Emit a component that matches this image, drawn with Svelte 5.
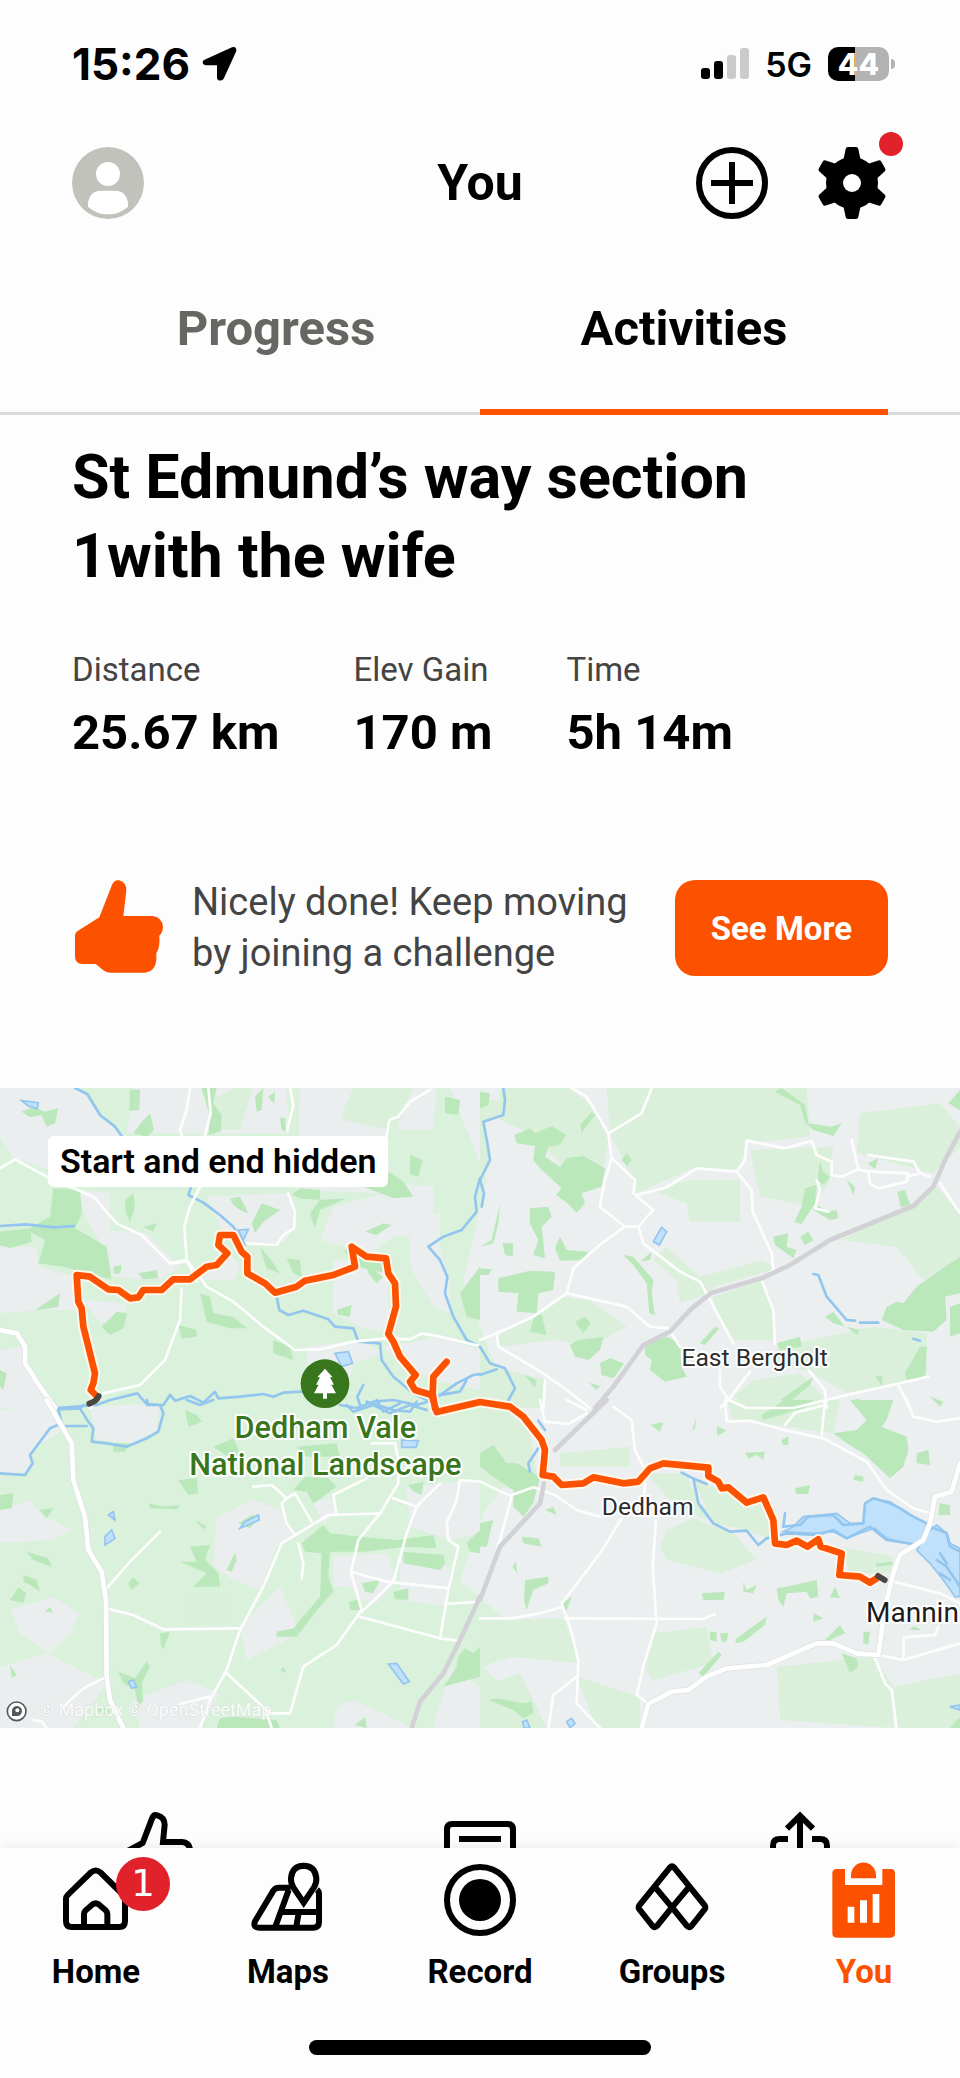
<script>
  let tab = $state('Activities');

  const stats = [
    { label: 'Distance', value: '25.67 km' },
    { label: 'Elev Gain', value: '170 m' },
    { label: 'Time', value: '5h 14m' }
  ];

  const teeth = [0, 60, 120, 180, 240, 300];

  const route =
    'M290,948 L272,930 280,910 285,880 265,800 250,740 245,685 235,665 230,585 270,590 325,628 355,630 390,655 415,652 430,630 485,630 520,598 570,598 620,560 650,555 682,520 655,495 660,465 700,465 725,515 742,530 742,580 795,610 825,638 890,620 915,602 1000,585 1065,560 1055,500 1100,530 1158,535 1165,580 1185,610 1188,680 1165,762 1180,785 1200,830 1247,885 1230,905 1245,930 1295,945 1310,996 1440,966 1530,980 1570,1010 1625,1080 1635,1110 1628,1185 1660,1190 1685,1215 1750,1210 1780,1192 1870,1210 1915,1205 1950,1165 1990,1150 2125,1163 2125,1188 2155,1205 2165,1225 2185,1222 2240,1268 2290,1252 2320,1320 2325,1390 2360,1395 2390,1382 2422,1400 2455,1378 2462,1400 2525,1420 2518,1485 2580,1490 2610,1508 2630,1495 M1305,985 L1298,940 1300,890 1340,845';

  // Each tile is drawn in its own 1440-unit wide coordinate space.
  const tiles = [
    {
      x: 0,
      y: 0,
      plain: [
        '0,24 240,24 300,110 380,170 200,180 145,270 40,235 0,170',
        '400,24 860,24 865,160 380,160 390,100',
        '900,24 1060,24 1020,110 1160,150 1170,310 1300,320 1300,470 1180,470 1110,520 960,480 1000,380 1150,340 890,330',
        '620,350 870,340 885,440 850,490 740,490 660,440',
        '560,24 620,24 630,140 560,150',
        '240,330 330,340 330,450 440,460 540,560 480,600 330,590 320,520 250,400',
        '0,500 110,500 115,560 220,590 230,690 120,690 0,700',
        '0,810 60,800 150,984 0,984',
        '300,730 250,660 380,670 370,720',
        '1000,540 1160,550 1170,760 1080,740 1000,700',
        '1230,420 1320,400 1320,500 1350,620 1350,700 1300,680 1230,560',
        '1240,24 1310,24 1300,150 1190,150',
        '1150,800 1320,770 1440,810 1440,930 1300,900 1200,850',
        '660,500 690,520 720,560 700,600 600,600 640,570',
        '920,800 1080,780 1150,820 1060,850 1050,900 920,860'
      ],
      field: ['1060,24 1230,24 1190,120 1160,150 1030,120', '640,60 700,24 760,24 720,150 650,150'],
      wood: [
        '65,95 100,80 135,95 175,85 165,130 140,140 125,105 90,112',
        '390,30 420,28 418,90 388,92',
        '400,160 430,120 450,100 462,150 440,170',
        '605,24 650,24 640,70 665,105 662,155 625,165 630,110',
        '765,50 790,24 785,90 770,95',
        '805,50 825,35 822,72',
        '840,112 855,115 858,155 845,150',
        '1335,50 1380,60 1375,105 1335,100',
        '1230,225 1268,240 1255,290 1230,282',
        '1090,320 1165,275 1210,305 1240,350 1180,355 1130,335',
        '160,325 240,330 245,400 225,445 320,500 335,598 240,575 190,560 115,550 135,480 80,450 150,410',
        '0,455 90,445 95,485 30,505 0,495',
        '375,360 400,340 405,380 390,425 378,400',
        '430,440 470,430 460,455',
        '340,560 365,555 362,580 342,582',
        '415,580 470,570 475,595 430,598',
        '105,690 180,640 175,680 135,688',
        '305,740 350,695 382,700 370,745 330,765',
        '535,735 590,750 590,770 545,775',
        '600,640 630,650 640,700 700,710 740,745 690,745 620,725',
        '755,430 785,370 840,390 790,425 765,460',
        '690,355 720,350 745,400 720,390 700,375',
        '875,345 900,325 960,330 960,360 900,355',
        '930,400 960,360 1040,355 960,390 945,445',
        '1095,455 1150,430 1175,435 1130,465',
        '860,535 900,540 905,590 880,580',
        '1030,510 1100,525 1180,550 1160,580 1070,560',
        '1100,555 1150,590 1130,610 1105,580',
        '1380,640 1440,560 1440,720 1400,710',
        '1010,690 1055,675 1050,710 1015,705',
        '820,780 870,800 880,840 820,820',
        '780,500 820,550 840,580 800,565',
        '0,870 20,880 10,930 0,920'
      ],
      water: ['1005,820 1045,815 1058,850 1025,860', '65,62 115,68 112,86 85,78', '715,450 745,448 730,480'],
      rivers: [
        'M225,24 L262,42 300,105 345,140 365,168',
        'M572,325 L565,345 610,368 660,405 700,440 735,495',
        'M0,438 L80,433 160,442 222,438',
        'M830,650 L838,690 865,705 910,692 985,718 1005,740 1060,745 1075,785 1140,790 1145,840 1180,890 1240,940 1290,965',
        'M1440,295 L1425,350 1430,395 1385,450 1330,470 1285,500 1320,540 1342,590 1335,640 1360,710 1400,780 1440,800',
        'M170,984 L290,975 330,960 412,940 442,975 490,975 510,945 525,962 570,948 610,968 645,935 655,955 720,950 790,942 820,950 850,938 905,935',
        'M1020,975 L1070,984 1120,965 1180,960 1250,975 1300,960 1370,910 1420,885 1440,882',
        'M1290,950 L1380,935 1400,900',
        'M1090,915 L1072,950 1080,975'
      ],
      roads: [
        'M570,24 L560,90 540,150 600,320 570,380 553,440 560,540 620,620 700,665 790,740 885,810 960,808 1060,785 1160,775 1230,778 1265,760 1320,770 1440,798',
        'M0,265 L45,238 140,290 280,350 350,430 425,465 510,550 560,545',
        'M545,625 L540,720 495,840 420,915 310,940 270,984',
        'M870,24 L880,75 862,150',
        'M865,340 L885,395 882,445 850,465 830,495 740,490',
        'M1290,30 L1230,65 1195,110 1168,120 1155,200',
        'M510,550 L560,540 590,605',
        'M625,24 L632,100 615,165'
      ],
      major: ['M0,750 L50,760 75,800 75,850 120,920 165,984'],
      trunk: []
    },
    {
      x: 1440,
      y: 0,
      plain: [],
      field: [
        '60,24 270,24 350,90 385,180 365,300 240,250 150,160 60,120',
        '380,24 980,24 990,170 800,190 775,275 640,265 470,340 440,260 390,160',
        '630,300 780,300 780,425 630,425 620,370 510,330',
        '1140,100 1380,70 1440,140 1440,200 1360,280 1130,220',
        '810,210 1060,200 1050,300 1000,380 840,350',
        '0,60 70,60 60,110 10,130 30,260 0,300',
        '520,540 560,500 660,590 850,540 880,560 880,570 700,620 690,640 600,670 590,600',
        '700,650 850,600 885,690 880,780 760,780 705,690',
        '50,770 250,650 330,660 440,740 330,800 220,780 60,800',
        '890,800 1180,740 1340,760 1340,890 1100,940 1000,880 890,850',
        '820,900 960,880 1040,960 820,984 760,950',
        '1280,380 1370,320 1440,400 1440,530 1330,600 1250,500 1080,480',
        '0,840 80,870 200,900 190,984 0,984'
      ],
      wood: [
        '0,35 30,40 25,75 0,85',
        '103,165 150,145 165,160 215,138 258,165 240,195 205,200 195,230 240,260 260,235 310,228 375,265 365,320 305,340 315,370 290,398 262,370 228,345 245,325 180,265 160,240 165,198 110,190',
        '300,135 335,95 345,105 305,158',
        '425,240 440,218 455,240 440,258',
        '150,385 205,380 215,410 185,440 195,535 160,525 175,480 150,430',
        '225,505 240,470 260,510 325,515 310,540 240,542',
        '68,490 100,490 98,530 75,525',
        '0,500 35,480 60,370 55,430 40,490',
        '55,595 150,572 225,575 220,630 175,640 170,700 110,695 115,640 55,635',
        '0,565 35,568 25,585 0,585',
        '165,700 185,705 200,765 150,755',
        '285,725 315,710 332,730 310,760',
        '270,795 295,780 370,770 360,810 325,840 285,830',
        '360,850 390,835 432,850 400,895 365,885',
        '328,908 360,918 348,930',
        '135,885 170,900 165,925',
        '495,795 560,770 600,790 605,860 620,890 555,905 510,870 515,840 495,825',
        '430,525 460,530 520,600 515,640 525,705 508,700 500,610 460,555',
        '480,545 515,515 510,540',
        '660,790 705,740 718,745 675,795',
        '885,35 905,24 975,75 985,130 1055,140 1085,130 1060,168 1000,150 975,125 960,75',
        '1020,245 1030,275 1050,290 1030,315 1012,300',
        '975,325 1010,315 1005,370 965,432 943,425 965,380',
        '1003,370 1045,395 1070,390 1075,415 1050,420 1000,390',
        '1100,300 1125,320 1120,345',
        '1252,335 1275,330 1290,375 1262,382',
        '1163,250 1195,235 1185,268',
        '880,470 925,460 920,500 950,510 940,535 885,495',
        '960,470 985,455 1000,480 975,495',
        '1405,70 1440,30 1440,90',
        '1220,680 1250,665 1270,670 1310,620 1380,570 1440,530 1440,640 1395,650 1400,720 1360,755 1270,750 1205,720',
        '1035,710 1060,695 1095,740 1060,730',
        '1100,740 1140,750 1130,765',
        '1320,800 1340,800 1335,895 1280,900 1275,880',
        '1410,680 1440,670 1440,760 1410,770',
        '1185,890 1205,885 1208,920',
        '890,790 960,770 965,800 900,810',
        '900,960 1000,890 990,915 930,965',
        '1125,955 1200,975 1210,984 1140,984',
        '1350,950 1390,965 1380,980'
      ],
      water: ['545,442 560,455 538,495 520,485'],
      rivers: [
        'M70,24 L75,60 70,105 10,125 22,190 30,240 0,300 12,340 5,380',
        'M0,800 L30,850 75,865 105,925 85,960',
        'M0,885 L50,868',
        'M1000,582 L1015,585 1040,650 1100,720 1125,722 M1140,728 L1195,728',
        'M1300,776 L1320,782'
      ],
      roads: [
        'M275,24 L320,50 385,160 395,235 465,300 460,340 520,390 475,440 490,490 600,575 660,605 690,660 760,790',
        'M515,24 L485,100 385,160',
        'M395,235 L372,310 360,380 435,440 475,440',
        'M435,440 L365,490 280,565 260,640 160,710 50,760 0,780',
        'M50,760 L55,800 190,880 260,930 330,984',
        'M260,640 L350,660 440,680 510,740 565,745 600,800',
        'M470,345 L560,322 650,265 770,275 815,330 818,395 875,520 880,570 845,600 880,690 885,790',
        'M770,275 L795,240 800,182 915,205 995,183 1010,225 1055,245 1055,285 1085,290 1135,268 1165,275 1170,310 1195,325 1280,305 1285,280 1170,275',
        'M1135,268 L1115,180 M1165,225 L1300,245 1320,280 1280,290',
        'M1320,280 L1350,290',
        'M1380,310 L1440,400',
        'M1010,300 L1020,330 1005,385 1045,395',
        'M985,870 L1035,930 1040,984',
        'M720,870 L720,920 745,960 810,875',
        'M720,984 L745,960 800,984 940,984 1100,945 1250,912 1345,890',
        'M1255,915 L1290,984',
        'M195,900 L190,984'
      ],
      major: [],
      trunk: ['M1440,155 L1400,230 1360,320 1300,378 1050,480 930,555 845,595 695,638 635,685 570,755 490,795 400,920 345,984']
    },
    {
      x: 0,
      y: 960,
      plain: [
        '0,30 150,10 200,80 100,150 80,215 0,225',
        '270,20 480,10 470,90 400,130 290,120',
        '0,330 90,300 130,350 220,390 150,420 0,430',
        '30,630 160,590 240,640 210,700 150,760 60,700',
        '650,350 760,300 840,330 880,400 830,440 780,570 700,540 640,500',
        '0,800 140,760 320,850 220,984 0,984',
        '400,900 560,840 660,880 600,984 420,984',
        '940,310 990,290 1010,340 970,370',
        '1220,260 1440,240 1440,400 1350,420 1230,380',
        '1000,470 1160,460 1190,540 1130,610 1080,600 1050,560 1000,560',
        '1010,920 1060,900 1240,984 1000,984',
        '1200,480 1350,500 1340,620 1200,600',
        '720,680 840,560 900,700 740,780',
        '1350,800 1440,860 1440,984 1300,984'
      ],
      field: ['560,590 690,580 690,670 560,665'],
      wood: [
        '555,30 590,45 605,65 565,80',
        '340,130 390,130 375,155 340,155',
        '640,140 700,115 720,160 690,175',
        '890,140 1010,130 1020,170 920,170',
        '535,240 590,235 595,280 565,285',
        '0,285 40,280 35,325 0,330',
        '120,330 160,325 140,355',
        '445,310 490,320 540,315 530,328 450,325',
        '880,270 915,230 985,235 1010,260 940,310 920,275',
        '1225,255 1270,245 1265,285 1240,275',
        '715,370 755,345 780,350 750,385',
        '585,360 620,380 610,388',
        '905,430 940,400 970,375 990,400 1080,410 1190,420 1300,405 1310,445 1220,440 1090,455 990,455 985,530 1000,575 960,620 935,650 890,710 830,710 830,695 880,685 960,590 965,460 915,455',
        '1210,455 1330,465 1335,490 1320,510 1210,490',
        '1400,430 1440,390 1440,460 1410,455',
        '570,440 630,435 615,480 655,520 660,560 580,560 620,520 540,485 590,485',
        '680,510 705,458 710,480 695,515',
        '80,455 145,475 155,500 100,480',
        '70,525 110,540 120,575 100,560 70,545',
        '30,600 55,562 78,580 70,608',
        '385,550 400,532 418,550 395,570',
        '135,635 150,620 160,638',
        '480,700 510,695 490,748 482,735',
        '355,815 405,835 440,785 450,800 425,850 430,900 415,925 405,870 370,850',
        '1085,550 1140,540 1120,580 1095,575',
        '1180,575 1225,565 1225,600 1185,598',
        '1048,605 1075,598 1080,630 1050,630',
        '840,812 850,800 860,818',
        '30,795 50,825 35,835',
        '1375,770 1395,745 1420,760 1440,740 1440,830 1330,860 1370,800',
        '660,955 700,950 830,960 840,984 650,984',
        '1065,975 1095,950 1100,984',
        '290,915 330,930 325,945 295,935'
      ],
      water: ['1165,792 1190,790 1228,845 1210,852', '325,345 340,335 345,360', '315,410 335,390 345,415 315,435', '385,845 400,840 410,860 395,865', '720,385 735,365 775,345 778,360', '1205,120 1255,122 1248,142 1205,142'],
      rivers: [
        'M250,15 L240,25 175,28 185,70 150,85 90,165 98,190 75,225 0,220',
        'M240,25 L265,65 280,85 275,125 320,130 380,140 440,115 475,95 490,40 480,15 445,12 440,0',
        'M185,78 L260,78',
        'M560,0 L600,15 640,0',
        'M1040,15 L1060,35 1120,15 1170,40 1230,15 1280,30 M1100,5 L1180,30 1230,35 1250,5 M1130,0 L1150,35 1200,10'
      ],
      roads: [
        'M320,565 L390,485 480,395',
        'M320,625 L400,645 490,688 720,685',
        'M320,830 L250,865 190,920',
        'M1145,340 L985,345 845,430 790,560 720,690 680,810 630,900 600,984',
        'M630,890 L540,912',
        'M760,260 L815,255 860,295 845,310 860,370 885,405',
        'M860,295 L885,280 935,365 M1100,235 L1000,285 1010,345',
        'M895,430 L910,490 905,535',
        'M1115,130 L1185,130 1195,180 1195,250 1140,340 1075,420 1053,515 1085,630 1010,735 910,800 870,940 810,940 680,820',
        'M1053,515 L1160,545 1345,565',
        'M1320,250 L1250,320 1220,400 1180,545 1085,635',
        'M1180,295 L1250,320',
        'M1080,650 L1320,715 1370,722',
        'M1380,240 L1370,300 1340,370 1345,420 1375,440 1345,570 1320,715',
        'M1440,245 L1380,240 M1335,612 L1440,605',
        'M100,960 L125,965 140,984',
        'M800,940 L815,984'
      ],
      major: ['M140,0 L215,130 220,240 255,350 265,450 305,515 318,600 320,830 330,900 370,984'],
      trunk: ['M1440,590 L1380,720 1330,820 1260,905 1235,984']
    },
    {
      x: 1440,
      y: 960,
      plain: [],
      field: [
        '0,25 80,25 150,100 170,220 100,270 0,240',
        '560,390 640,355 760,400 830,480 720,520 560,480 540,440',
        '500,220 620,220 650,300 740,380 660,350 560,290',
        '640,240 780,290 860,310 870,420 800,390 700,370',
        '0,660 250,655 285,740 290,790 100,770 0,800',
        '520,700 680,680 700,790 520,840 490,800',
        '290,830 480,890 480,984 350,984',
        '740,0 1080,0 1060,100 920,80 760,60',
        '1080,440 1240,470 1230,520 1110,520',
        '890,800 1180,770 1240,860 1240,984 900,960',
        '1240,860 1440,820 1440,984 1250,984',
        '240,160 450,140 450,200 240,200',
        '0,860 120,820 200,984 0,984'
      ],
      wood: [
        '0,160 40,135 80,190 110,190 180,230 160,310 130,350 100,320 100,270 40,230 0,200',
        '0,370 40,360 20,440 0,440',
        '125,410 175,415 185,440 130,430',
        '195,330 220,320 230,345',
        '135,540 205,530 205,550 160,570 140,630 132,600',
        '97,500 108,485 112,520',
        '245,610 275,590 255,645',
        '512,75 550,65 540,95',
        '710,78 740,92 712,108',
        '635,95 650,50 645,85',
        '905,120 925,108 925,135 908,135',
        '795,158 855,155 850,180 830,165 805,175',
        '845,45 900,10 910,0 1000,0 970,25 850,60',
        '1060,100 1130,90 1160,60 1110,0 1240,0 1220,60 1205,80 1280,110 1285,150 1270,200 1230,235 1150,160 1100,130',
        '1310,160 1345,150 1350,195 1310,190',
        '1125,225 1150,230 1150,245 1120,240',
        '945,265 990,255 985,282 950,282',
        '1378,310 1410,315 1410,345 1375,345',
        '890,565 920,560 1010,540 1015,590 990,595 980,575 920,580 910,620 895,600',
        '1065,560 1080,595 1050,590',
        '1190,490 1240,485 1235,495 1185,500',
        '790,545 800,570 830,555 820,580 790,575',
        '665,580 735,575 730,600 670,600',
        '770,715 860,650 855,675 790,725 765,730',
        '690,695 710,695 710,725 690,720',
        '720,700 745,700 740,725 725,725',
        '1000,640 1030,655 1000,665',
        '1035,720 1080,675 1095,700 1050,720',
        '1150,695 1170,695 1165,735 1150,730',
        '1085,760 1130,775 1135,800 1110,820',
        '655,820 715,755 725,765 670,830',
        '25,900 50,895 130,910 155,905 160,940 130,955 100,930',
        '1300,678 1325,690 1290,690',
        '1430,960 1440,955 1440,984 1410,984'
      ],
      water: [
        '1155,310 1180,295 1230,305 1290,345 1340,370 1330,420 1300,435 1220,415 1185,385 1140,400 1100,415 1060,395 1000,400 910,395 940,380 970,350 1020,345 1070,340 1110,370 1150,370',
        '1340,400 1370,375 1400,400 1410,430 1440,445 1440,590 1425,590 1390,540 1350,490 1310,450',
        '260,965 275,955 285,970 270,984',
        '128,965 140,960 150,984 132,984',
        '1410,920 1440,915 1440,930'
      ],
      rivers: [
        'M605,218 L645,238 680,252',
        'M640,235 L655,310 700,370 750,395 800,392 835,435 860,415 920,400 1010,405',
        'M915,340 L910,380 960,375 985,350 1060,345 1090,375 1150,370 1155,310 1180,295 1230,310 1260,325 1300,350 1340,370',
        'M1010,405 L1060,390 1100,415 1170,380 1220,420 1300,432',
        'M1350,380 L1400,400 1410,440 1440,455 M1370,480 L1400,500 1440,560 M1380,520 L1410,540 M1380,460 L1400,490',
        'M150,215 L145,190 175,145',
        'M175,62 L195,90'
      ],
      roads: [
        'M180,0 L195,65 265,72 320,40 M260,0 L320,30',
        'M400,20 L455,60 465,150 490,200',
        'M495,250 L490,310',
        'M0,245 L95,290 60,420 50,450',
        'M95,285 L160,262 225,285 290,330 360,350',
        'M425,355 L360,460 245,610 270,680 295,780 290,910 360,984',
        'M0,655 L95,655 180,640 245,622',
        'M255,655 L670,657 705,642',
        'M528,360 L518,500 530,670 490,800 470,885 505,910',
        'M290,830 L220,885 205,984',
        'M735,0 L740,65 810,62 920,92 1030,115 1160,185 1220,270 1300,325 1350,340',
        'M915,75 L945,38 1035,15 M1035,0 L1025,105',
        'M1280,0 L1300,50 1370,65 1440,55',
        'M1240,545 L1380,580 1440,610',
        'M1195,765 L1270,780 1440,730 M1270,780 L1272,712 1365,705 1375,680',
        'M1185,775 L1215,850 1235,870 1250,984'
      ],
      major: [
        'M1440,190 L1415,275 1365,290 1350,370 1330,420 1260,465 1240,520 1215,620 1195,765 1130,760 1060,730 1010,730 860,795 740,805 680,830 625,870 575,875 505,912 485,984'
      ],
      trunk: ['M380,0 L225,150 M192,250 L180,310 60,440 0,600']
    }
  ];
</script>

<div class="app">
  <div class="status">
    <div class="clock">
      <span>15:26</span>
      <svg class="arrow" viewBox="456 50 108 108" aria-hidden="true">
        <path d="M462,92 L546,54 Q560,50 559,65 L521,148 Q514,157 504,152 Q501,150 501,144 V108 H467 Q458,106 458,99 Q458,94 462,92Z" />
      </svg>
    </div>
    <div class="signals">
      <svg class="bars" viewBox="0 0 48 32" aria-hidden="true">
        <rect x="0" y="20" width="9" height="11" rx="3" />
        <rect x="13" y="13" width="9" height="18" rx="3" />
        <rect class="off" x="26" y="7" width="9" height="24" rx="3" />
        <rect class="off" x="39" y="0" width="9" height="31" rx="3" />
      </svg>
      <span class="network">5G</span>
      <div class="battery"><span>44</span></div>
    </div>
  </div>

  <header>
    <button class="icon" aria-label="Profile">
      <svg viewBox="66 351 216 216">
        <circle cx="174" cy="459" r="108" fill="#c2c2bd" />
        <circle cx="174" cy="432" r="36" fill="#fff" />
        <path d="M114,530 V520 Q118,484 152,482 H196 Q230,484 234,520 V530 Q208,553 174,553 Q140,553 114,530Z" fill="#fff" />
      </svg>
    </button>
    <h1>You</h1>
    <div class="tools">
      <button class="icon" aria-label="Add">
        <svg viewBox="0 0 72 72" fill="none" stroke="#000" stroke-width="6">
          <circle cx="36" cy="36" r="33" />
          <path d="M36,15 V57 M15,36 H57" />
        </svg>
      </button>
      <button class="icon" aria-label="Settings">
        <svg viewBox="468 381 216 216">
          <circle cx="576" cy="489" r="78" />
          {#each teeth as angle}
            <path transform="rotate({angle} 576 489)" d="M549,425 L557,387 Q558,381 564,381 H588 Q594,381 595,387 L603,425Z" />
          {/each}
          <circle cx="576" cy="489" r="27" fill="#fff" />
        </svg>
        <i class="dot"></i>
      </button>
    </div>
  </header>

  <div class="tabs" role="tablist">
    {#each ['Progress', 'Activities'] as name}
      <button role="tab" aria-selected={tab === name} onclick={() => (tab = name)}>{name}</button>
    {/each}
  </div>

  <main>
    <h2>St Edmund’s way section 1with the wife</h2>

    <dl>
      {#each stats as s}
        <div>
          <dt>{s.label}</dt>
          <dd>{s.value}</dd>
        </div>
      {/each}
    </dl>

    <section class="challenge">
      <svg class="thumb" viewBox="36 30 288 288" aria-hidden="true">
        <path d="M118,142 L157,42 Q164,28 178,31 Q200,38 199,62 L190,138 H278 Q308,142 309,172 Q308,188 298,197 Q301,230 289,250 V270 Q286,304 256,308 H150 Q138,308 130,301 L107,282 H66 Q46,280 45,260 V195 Q46,188 53,183Z" />
      </svg>
      <p>Nicely done! Keep moving by joining a challenge</p>
      <button class="cta">See More</button>
    </section>

    <div class="map">
      <svg viewBox="0 24 2880 1920" preserveAspectRatio="xMidYMid slice" role="img" aria-label="Route map">
        <rect x="0" y="0" width="2880" height="1960" fill="#ebeff0" />
        <polygon
          fill="#daf1dc"
          points="0,0 1340,0 1460,300 1390,600 1500,900 1600,1100 1450,1300 1380,1500 1540,1640 1450,1760 1640,1960 0,1960"
        />
        {#each tiles as t}
          <g transform="translate({t.x} {t.y})">
            {#each t.plain as p}<polygon class="plain" points={p} />{/each}
            {#each t.field as p}<polygon class="field" points={p} />{/each}
            {#each t.wood as p}<polygon class="wood" points={p} />{/each}
          </g>
        {/each}
        {#each tiles as t}
          <g transform="translate({t.x} {t.y})">
            {#each t.water as p}<polygon class="water" points={p} />{/each}
            {#each t.rivers as d}<path class="river" {d} />{/each}
            {#each t.roads as d}<path class="road" {d} />{/each}
            {#each t.trunk as d}<path class="trunk" {d} />{/each}
            {#each t.major as d}<path class="major-edge" {d} /><path class="major" {d} />{/each}
          </g>
        {/each}

        <path class="halo" d={route} />
        <path class="route" d={route} />
        <path class="hidden-end" d="M268,971 Q290,964 296,948 M2634,1488 L2654,1500" />

        <circle cx="975" cy="911" r="73" fill="#38761d" />
        <path d="M975,866 L998,892 H990 L1002,914 H994 L1008,940 H981 V956 H969 V940 H942 L956,914 H948 L960,892 H952Z" fill="#fff" />

        <g class="labels">
          <text class="park" x="976" y="1074">Dedham Vale</text>
          <text class="park" x="976" y="1184">National Landscape</text>
          <text class="village" x="2264" y="858">East Bergholt</text>
          <text class="village" x="1943" y="1305">Dedham</text>
          <text class="town" x="2598" y="1625">Mannin</text>
          <text class="credit" x="120" y="1908">© Mapbox © OpenStreetMap</text>
        </g>
        <circle cx="50" cy="1894" r="28" fill="#fff" stroke="#55585a" stroke-width="5" />
        <path d="M36,1908 V1892 A15,15 0 1 1 52,1908Z" fill="#55585a" />
        <circle cx="52" cy="1891" r="6" fill="#fff" />
      </svg>
      <span class="chip">Start and end hidden</span>
    </div>

    <div class="actions">
      <button class="icon" aria-label="Give kudos">
        <svg class="line" viewBox="372 96 216 216">
          <path d="M381,214 L428,189 L456,116 Q460,103 472,106 Q494,112 494,134 L489,186 H546 Q570,188 570,212 V296 H381Z" />
        </svg>
      </button>
      <button class="icon" aria-label="Comment">
        <svg class="line" viewBox="1332 96 216 216">
          <path d="M1341,300 V148 Q1341,132 1357,132 H1523 Q1539,132 1539,148 V300Z M1377,177 H1503" />
        </svg>
      </button>
      <button class="icon" aria-label="Share">
        <svg class="line" viewBox="852 96 216 216">
          <path d="M960,108 V250 M921,146 L960,107 L999,146 M924,177 H899 Q879,177 879,197 V300 H1041 V197 Q1041,177 1021,177 H996" />
        </svg>
      </button>
    </div>
  </main>

  <nav>
    <a href="#home">
      <span class="glyph">
        <svg class="line" viewBox="180 252 216 216" aria-hidden="true">
          <path d="M198,424 V356 Q198,350 203,345 L273,277 Q287,266 301,277 L370,345 Q375,350 375,356 V424 Q375,441 358,441 H215 Q198,441 198,424Z" />
          <path d="M252,441 V402 Q252,396 257,391 L278,373 Q287,367 296,373 L317,391 Q322,396 322,402 V441" />
        </svg>
        <b class="badge">1</b>
      </span>
      Home
    </a>
    <a href="#maps">
      <svg class="line" viewBox="756 252 216 216" aria-hidden="true">
        <path d="M872,323 H836 Q826,323 820,332 L765,424 Q758,443 778,443 H941 Q957,443 957,427 V342 Q957,334 951,329" />
        <path d="M866,330 L826,440 M846,396 H955 M896,398 L889,440" />
        <path d="M911,368 L880,322 Q872,309 873,295 Q876,258 911,257 Q946,258 949,295 Q950,309 942,322Z" fill="#fff" />
      </svg>
      Maps
    </a>
    <a href="#record">
      <svg viewBox="0 0 72 72" aria-hidden="true">
        <circle cx="36" cy="36" r="33" fill="none" stroke="#000" stroke-width="6" />
        <circle cx="36" cy="36" r="21" />
      </svg>
      Record
    </a>
    <a href="#groups">
      <svg class="line" viewBox="468 252 216 216" aria-hidden="true">
        <path d="M582,262 L674,376 Q678,382 674,388 L634,438 Q628,445 621,438 L576,382 L531,438 Q524,445 518,438 L478,388 Q474,382 478,376 L570,262 Q576,255 582,262Z M524,320 L576,382 L628,320" />
      </svg>
      Groups
    </a>
    <a href="#you" class="current" aria-current="page">
      <svg viewBox="1044 252 216 216" aria-hidden="true">
        <path d="M1057,280 Q1057,267 1070,267 H1095 V315 H1207 V267 H1232 Q1245,267 1245,280 V460 Q1245,473 1232,473 H1070 Q1057,473 1057,460Z M1113,295 V286 A37,38 0 0 1 1188,286 V295Z" />
        <path d="M1103,380 H1123 V428 H1103Z M1140,361 H1161 V428 H1140Z M1178,342 H1198 V428 H1178Z" fill="#fff" />
      </svg>
      You
    </a>
  </nav>
  <div class="home-bar"><i></i></div>
</div>

<style>
  :global(body) {
    background: #fdfdfd;
  }

  .app {
    --orange: #fc5200;
    --gutter: 72px;
    display: flex;
    flex-direction: column;
    height: 100vh;
    color: #000;
    font-family: Roboto, 'Liberation Sans', sans-serif;
  }

  button {
    padding: 0;
    border: 0;
    background: none;
    color: inherit;
    font: inherit;
  }

  svg {
    display: block;
    overflow: visible;
  }

  .line {
    fill: none;
    stroke: #000;
    stroke-width: 18;
  }

  .status {
    display: flex;
    flex: none;
    align-items: center;
    justify-content: space-between;
    height: 128px;
    padding: 0 64px 0 var(--gutter);
    font-family: Inter, sans-serif;
  }

  .clock,
  .signals {
    display: flex;
    align-items: center;
  }

  .clock {
    gap: 12px;
    font-size: 44px;
    font-weight: 700;
  }

  .arrow {
    width: 36px;
    height: 36px;
  }

  .signals {
    gap: 16px;
  }

  .bars {
    width: 48px;
    height: 32px;
  }

  .off {
    fill: #cbcbcb;
  }

  .network {
    font-size: 34px;
    font-weight: 600;
  }

  .battery {
    position: relative;
    width: 61px;
    height: 34px;
    margin-right: 7px;
    border-radius: 10px;
    background: linear-gradient(90deg, #000 44%, #b3b3b3 44%);
    color: #fff;
    font-size: 30px;
    font-weight: 800;
    line-height: 34px;
    text-align: center;
  }

  .battery::after {
    content: '';
    position: absolute;
    top: 12px;
    right: -6px;
    width: 4px;
    height: 10px;
    border-radius: 0 4px 4px 0;
    background: #b3b3b3;
  }

  header {
    display: grid;
    flex: none;
    grid-template-columns: 1fr auto 1fr;
    align-items: center;
    height: 110px;
    padding: 0 var(--gutter);
  }

  h1 {
    margin: 0;
    font-size: 50px;
    font-weight: 700;
    line-height: 60px;
  }

  .tools {
    display: flex;
    justify-content: flex-end;
    gap: 48px;
  }

  .icon {
    position: relative;
    width: 72px;
    height: 72px;
  }

  .dot {
    position: absolute;
    top: -15px;
    right: -15px;
    width: 24px;
    height: 24px;
    border-radius: 50%;
    background: #e2222b;
  }

  .tabs {
    display: grid;
    flex: none;
    grid-template-columns: 1fr 1fr;
    height: 177px;
    padding: 0 var(--gutter);
    background: linear-gradient(#dcdcdc, #dcdcdc) bottom / 100% 3px no-repeat;
  }

  .tabs button {
    padding-top: 10px;
    border-bottom: 6px solid transparent;
    color: #666663;
    font-size: 49px;
    font-weight: 700;
  }

  .tabs button[aria-selected='true'] {
    border-color: var(--orange);
    color: #000;
  }

  main {
    flex: 1;
    min-height: 0;
    overflow: hidden;
  }

  h2 {
    margin: 23px var(--gutter) 0;
    font-size: 61px;
    font-weight: 700;
    line-height: 79px;
  }

  dl {
    display: flex;
    gap: 74px;
    margin: 54px var(--gutter) 0;
  }

  dt {
    color: #444;
    font-size: 33px;
    line-height: 40px;
  }

  dd {
    margin: 13px 0 0;
    font-size: 49px;
    font-weight: 700;
    line-height: 60px;
  }

  .challenge {
    display: flex;
    align-items: center;
    gap: 24px;
    margin: 114px var(--gutter) 109px;
  }

  .thumb {
    flex: none;
    width: 96px;
    height: 96px;
    fill: var(--orange);
  }

  .challenge p {
    flex: 1;
    margin: 0;
    color: #444;
    font-size: 38px;
    line-height: 51px;
  }

  .cta {
    flex: none;
    height: 96px;
    padding: 0 36px;
    border-radius: 20px;
    background: var(--orange);
    color: #fff;
    font-size: 33px;
    font-weight: 700;
  }

  .map {
    position: relative;
  }

  .map > svg {
    width: 100%;
    aspect-ratio: 3 / 2;
    overflow: hidden;
  }

  .plain {
    fill: #ebeeef;
  }

  .field {
    fill: #daf0db;
  }

  .wood {
    fill: #bae8bb;
  }

  .water {
    fill: #bfe1fb;
    stroke: #94c5ef;
    stroke-width: 5;
  }

  .river,
  .road,
  .trunk,
  .major,
  .major-edge,
  .halo,
  .route,
  .hidden-end {
    fill: none;
    stroke-linecap: round;
    stroke-linejoin: round;
  }

  .river {
    stroke: #93c6ee;
    stroke-width: 8;
  }

  .road {
    stroke: #fdfdfd;
    stroke-width: 8;
  }

  .trunk {
    stroke: #d2d2d6;
    stroke-width: 14;
  }

  .major-edge {
    stroke: #dde0e2;
    stroke-width: 18;
  }

  .major {
    stroke: #fff;
    stroke-width: 14;
  }

  .halo {
    stroke: #fff6ec;
    stroke-width: 32;
  }

  .route {
    stroke: var(--orange);
    stroke-width: 20;
  }

  .hidden-end {
    stroke: #4a4644;
    stroke-width: 18;
  }

  .labels text {
    paint-order: stroke;
    stroke: #fff;
    stroke-width: 12;
    stroke-linejoin: round;
  }

  .labels .park {
    fill: #38761d;
    font-size: 92px;
    font-weight: 500;
    text-anchor: middle;
  }

  .labels .village {
    fill: #2d2d2d;
    font-size: 74px;
    text-anchor: middle;
  }

  .labels .town {
    fill: #1c1c1c;
    font-size: 84px;
  }

  .labels .credit {
    fill: #fff;
    stroke: #d5dbd8;
    stroke-width: 3;
    font-size: 54px;
    opacity: 0.8;
  }

  .chip {
    position: absolute;
    top: 48px;
    left: 48px;
    padding: 0 12px;
    border-radius: 6px;
    background: #fff;
    font-size: 34px;
    font-weight: 600;
    line-height: 51px;
  }

  .actions {
    display: grid;
    grid-template-columns: repeat(3, 1fr);
    justify-items: center;
    padding-top: 84px;
  }

  nav {
    position: relative;
    display: grid;
    flex: none;
    grid-template-columns: repeat(5, 1fr);
    height: 192px;
    background: #fdfdfd;
    box-shadow: 0 0 12px rgba(0, 0, 0, 0.09);
    clip-path: inset(-12px 0 0 0);
  }

  nav a {
    display: flex;
    flex-direction: column;
    align-items: center;
    gap: 16px;
    padding-top: 16px;
    color: #000;
    font-size: 33px;
    font-weight: 700;
    line-height: 40px;
    text-decoration: none;
  }

  nav svg {
    width: 72px;
    height: 72px;
  }

  .glyph {
    position: relative;
  }

  .badge {
    position: absolute;
    top: -7px;
    left: 56px;
    width: 54px;
    height: 54px;
    border-radius: 50%;
    background: #e2222b;
    color: #fff;
    font-family: 'DejaVu Sans', sans-serif;
    font-size: 37px;
    font-weight: 400;
    line-height: 54px;
    text-align: center;
  }

  nav .current {
    color: var(--orange);
    fill: var(--orange);
  }

  .home-bar {
    display: flex;
    flex: none;
    justify-content: center;
    height: 38px;
  }

  .home-bar i {
    width: 342px;
    height: 15px;
    border-radius: 8px;
    background: #000;
  }
</style>
